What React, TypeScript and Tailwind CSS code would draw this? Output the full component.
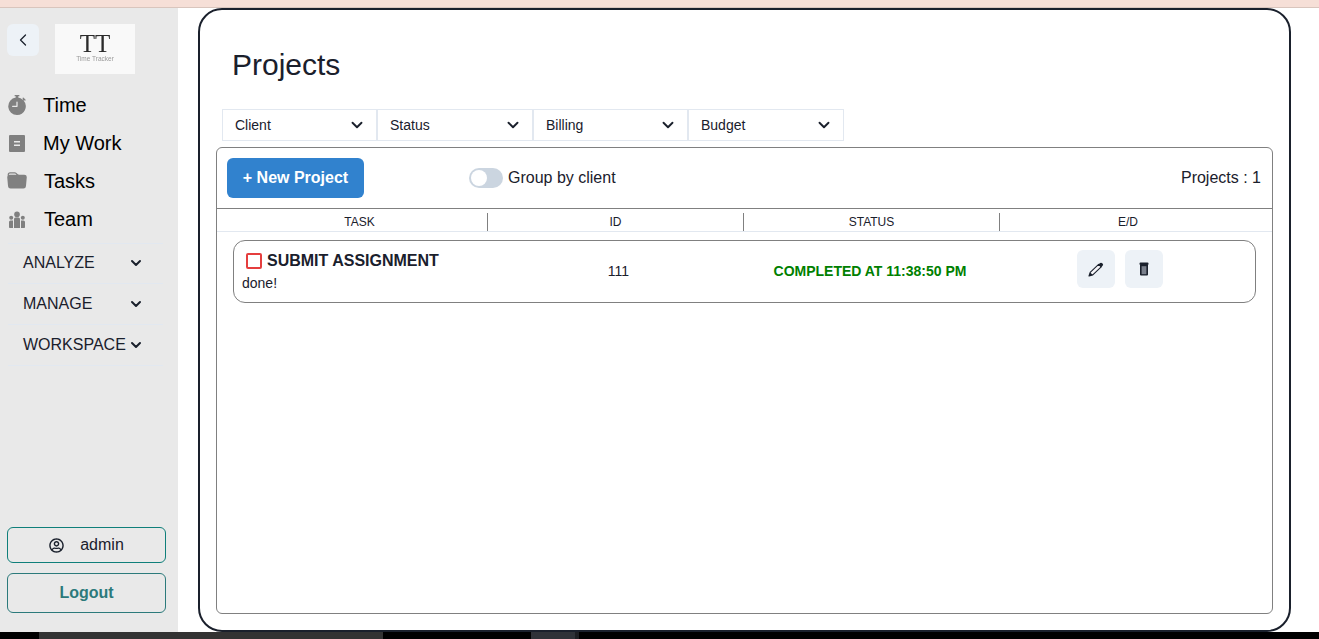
import { BsStopwatchFill, BsFolderFill } from "react-icons/bs";
import { FaRegUserCircle } from "react-icons/fa";
import { LuChevronDown, LuChevronLeft } from "react-icons/lu";
import type { ReactNode } from "react";

const WorkIcon = () => (
  <svg width="16" height="17" viewBox="0 0 16 17">
    <rect x="0" y="0" width="16" height="17" rx="1" fill="#808080" />
    <rect x="5" y="6" width="6" height="1.5" fill="#e9e9e9" />
    <rect x="5" y="9.5" width="6" height="1.5" fill="#e9e9e9" />
  </svg>
);

const TeamIcon = () => (
  <svg width="18" height="17" viewBox="0 0 18 17" fill="#808080">
    <circle cx="9" cy="3.4" r="2.8" />
    <circle cx="3.2" cy="6.8" r="2" />
    <circle cx="14.8" cy="6.8" r="2" />
    <path d="M6 8.2a1.6 1.6 0 0 1 1.6-1.6h2.8A1.6 1.6 0 0 1 12 8.2V17H6z" />
    <path d="M1 11a1.5 1.5 0 0 1 1.5-1.5H5V17H1.8a.8.8 0 0 1-.8-.8z" />
    <path d="M13 9.5h2.5A1.5 1.5 0 0 1 17 11v5.2a.8.8 0 0 1-.8.8H13z" />
  </svg>
);

const PenIcon = () => (
  <svg width="16" height="15" viewBox="0 0 16 15">
    <path d="M1 14l1.2-3.6L10.6 2.4l2.6 2.5-8.4 8z" fill="#f7f7fa" stroke="#1a202c" strokeWidth="1.1" strokeLinejoin="round" />
    <path d="M10.4 2.6l1.7-1.5a1.5 1.5 0 0 1 2.1.1l.5.5a1.5 1.5 0 0 1-.1 2.1l-1.4 1.5z" fill="#1a202c" />
    <path d="M1 14l1.2-3.6 2.4 2.3z" fill="#1a202c" />
  </svg>
);

const BinIcon = () => (
  <svg width="10" height="14" viewBox="0 0 10 14">
    <rect x="0.5" y="0.5" width="9" height="2.6" rx="1" fill="#1a202c" />
    <path d="M1 3h8v9.5a1 1 0 0 1-1 1H2a1 1 0 0 1-1-1z" fill="#1a202c" />
    <rect x="2.6" y="4.2" width="4.8" height="8" fill="#7a808c" />
  </svg>
);

const navItems: { label: string; icon: ReactNode; gap: string }[] = [
  { label: "Time", icon: <BsStopwatchFill size={20} color="#808080" />, gap: "ml-[16px]" },
  { label: "My Work", icon: <WorkIcon />, gap: "ml-[16px]" },
  { label: "Tasks", icon: <BsFolderFill size={20} color="#808080" />, gap: "ml-[17px]" },
  { label: "Team", icon: <TeamIcon />, gap: "ml-[17px]" },
];

const sections = [
  { label: "ANALYZE", height: "h-[40px]" },
  { label: "MANAGE", height: "h-[41px]" },
  { label: "WORKSPACE", height: "h-[41px]" },
];
const filters = ["Client", "Status", "Billing", "Budget"];
const columns = ["TASK", "ID", "STATUS", "E/D"];

export default function App() {
  return (
    <div className="flex h-[639px] w-[1319px] flex-col overflow-hidden bg-white font-['Liberation_Sans',Arial,sans-serif] text-[#1a202c]">
      <div className="h-[8px] shrink-0 border-b border-[#d9c5bd] bg-[#f6dfd7]" />

      <div className="flex min-h-0 flex-1">
        <aside className="flex w-[178px] shrink-0 flex-col bg-[#e9e9e9] pt-[16px]">
          <div className="flex items-start pl-[7px]">
            <button className="flex h-[32px] w-[32px] items-center justify-center rounded-md bg-[#edf2f7]">
              <LuChevronLeft size={20} strokeWidth={1.5} />
            </button>
            <div className="ml-[16px] flex h-[50px] w-[80px] flex-col items-center bg-[#f9f9f9] pt-[9px]">
              <span className="h-[22px] font-['Liberation_Serif',serif] text-[25px] leading-[22px] text-[#2b2b2b] blur-[0.4px]">TT</span>
              <span className="text-[6.5px] leading-[8px] text-[#999999] blur-[0.5px]">Time Tracker</span>
            </div>
          </div>

          <nav className="mt-[12px] pl-[7px]">
            {navItems.map((item) => (
              <div key={item.label} className="flex h-[38px] items-center">
                <span className="flex w-[20px] justify-center">{item.icon}</span>
                <span className={`text-[20px] text-black ${item.gap}`}>{item.label}</span>
              </div>
            ))}
          </nav>

          <div className="mx-[8px] mt-[5px] w-[155px] border-t border-[#e2e8f0]">
            {sections.map((section) => (
              <div key={section.label} className={`flex items-center justify-between border-b border-[#e2e8f0] pb-[1px] pl-[15px] pr-[19px] ${section.height}`}>
                <span className="text-[16px]">{section.label}</span>
                <LuChevronDown size={16} strokeWidth={3} />
              </div>
            ))}
          </div>

          <div className="mt-auto flex flex-col gap-[10px] px-[7px] pb-[19px]">
            <button className="flex h-[36px] w-[159px] items-center justify-center gap-[16px] rounded-md border border-[#0f7f7a] text-[16px]">
              <FaRegUserCircle size={15} />
              <span>admin</span>
            </button>
            <button className="h-[40px] w-[159px] rounded-md border border-[#2c7a7b] text-[16px] font-bold text-[#2c7a7b]">
              Logout
            </button>
          </div>
        </aside>

        <main className="ml-[20px] flex h-[624px] w-[1093px] flex-col rounded-[24px] border-2 border-[#1a202c] pb-[16px] pl-[16px] pr-[16px]">
          <h1 className="ml-[16px] mt-[36px] text-[30px] leading-[38px]">Projects</h1>

          <div className="ml-[6px] mt-[25px] grid w-fit grid-cols-[155px_156px_155px_156px]">
            {filters.map((filter) => (
              <div key={filter} className="flex h-[32px] items-center justify-between border border-[#e2e8f0] pl-[12px] pr-[10px] text-[14px]">
                <span>{filter}</span>
                <LuChevronDown size={18} strokeWidth={2.5} />
              </div>
            ))}
          </div>

          <section className="mt-[6px] flex min-h-0 w-[1057px] flex-1 flex-col rounded-md border border-[#808080]">
            <div className="flex h-[61px] shrink-0 items-center border-b border-[#808080] pl-[10px] pr-[11px]">
              <button className="h-[40px] w-[137px] rounded-md bg-[#3182ce] text-[16px] font-bold text-white">
                + New Project
              </button>
              <div className="ml-[105px] flex items-center">
                <span className="flex h-[20px] w-[34px] items-center rounded-full bg-[#cbd5e0] p-[2px]">
                  <span className="h-[16px] w-[16px] rounded-full bg-white" />
                </span>
                <span className="ml-[5px] text-[16px]">Group by client</span>
              </div>
              <span className="ml-auto text-[16px]">Projects : 1</span>
            </div>

            <div className="grid h-[23px] shrink-0 grid-cols-[256px_256px_256px_256px] items-end border-b border-[#e2e8f0] pl-[15px] text-[12px]">
              {columns.map((column, i) => (
                <div key={column} className={`flex h-[18px] items-center justify-center ${i < 3 ? "border-r border-[#808080]" : ""}`}>
                  {column}
                </div>
              ))}
            </div>

            <div className="ml-[16px] mt-[8px] grid h-[63px] w-[1023px] grid-cols-[255px_256px_250px_262px] items-center rounded-[12px] border border-[#808080]">
              <div className="pl-[8px]">
                <div className="flex items-center">
                  <span className="ml-[4px] h-[16px] w-[16px] rounded-[2px] border-2 border-[#e53e3e]" />
                  <span className="ml-[5px] text-[16px] font-bold leading-[20px]">SUBMIT ASSIGNMENT</span>
                </div>
                <div className="mt-[3px] text-[14px] leading-[18px]">done!</div>
              </div>
              <div className="pl-[3px] text-center text-[14px]">111</div>
              <div className="text-center text-[14px] font-bold text-[#008000]">COMPLETED AT 11:38:50 PM</div>
              <div className="flex gap-[10px] pb-[5px] pl-[82px]">
                <button className="flex h-[38px] w-[38px] items-center justify-center rounded-md bg-[#edf2f7]">
                  <PenIcon />
                </button>
                <button className="flex h-[38px] w-[38px] items-center justify-center rounded-md bg-[#edf2f7]">
                  <BinIcon />
                </button>
              </div>
            </div>
          </section>
        </main>
      </div>

      <div className="flex h-[7px] shrink-0 bg-black">
        <div className="ml-[39px] w-[344px] bg-[#333333]" />
        <div className="ml-[148px] w-[44px] bg-[#2f3238]" />
        <div className="w-[4px] bg-[#1d1f23]" />
      </div>
    </div>
  );
}
